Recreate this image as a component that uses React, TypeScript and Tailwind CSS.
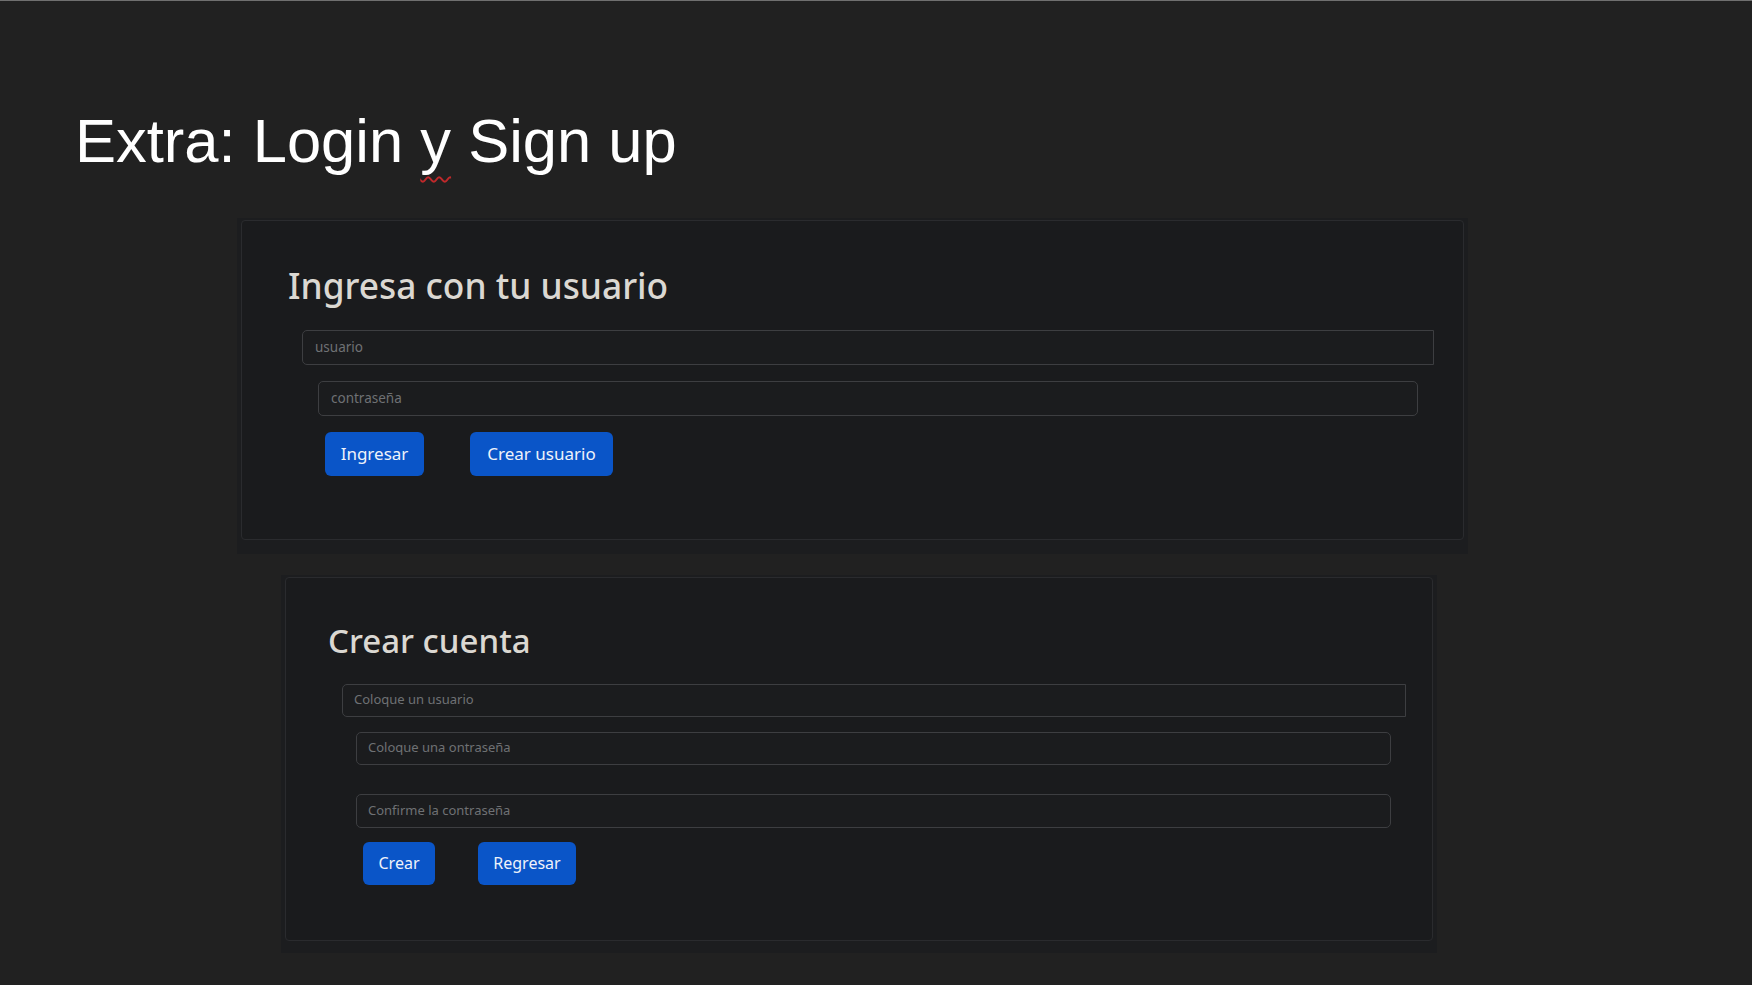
const sans = "font-['Noto_Sans','Open_Sans',sans-serif]";

type FieldProps = {
  placeholder: string;
  className: string;
};

const Field = ({ placeholder, className }: FieldProps) => {
  return (
    <div
      className={`flex items-center border border-[#3d3e41] bg-[#1b1c1e] text-[#6f7174] ${className}`}
    >
      {placeholder}
    </div>
  );
};

const Btn = ({ label, className }: { label: string; className: string }) => {
  return (
    <div
      className={`flex items-center justify-center rounded-[6px] bg-[#0a55c8] text-[#eef2fa] ${className}`}
    >
      {label}
    </div>
  );
};

export default function App() {
  return (
    <div className={`min-h-[985px] w-full border-t border-[#707070] bg-[#212121] ${sans}`}>
      <h1 className="pl-[75px] pt-[109px] font-['Liberation_Sans',Arial,sans-serif] text-[61.5px] leading-none text-white">
        Extra: Login{" "}
        <span className="underline decoration-[#c0282a] decoration-wavy decoration-[1.5px] underline-offset-[14px]">
          y
        </span>{" "}
        Sign up
      </h1>

      {/* login card */}
      <div className="ml-[237px] mt-[46px] h-[336px] w-[1231px] bg-[#1c1d1f] px-[4px] pb-[14px] pt-[2px]">
        <div className="h-[320px] rounded-[4px] border border-[#2a2b2e] bg-[#1a1b1d] pt-[47px]">
          <h2 className="ml-[46px] text-[35.3px] font-medium leading-none text-[#dbd8d2]">
            Ingresa con tu usuario
          </h2>
          <Field
            placeholder="usuario"
            className="ml-[60px] mr-[29px] mt-[27px] h-[35px] rounded-l-[5px] pl-[12px] text-[13.5px]"
          />
          <Field
            placeholder="contraseña"
            className="ml-[76px] mr-[45px] mt-[16px] h-[35px] rounded-[5px] pl-[12px] text-[13.5px]"
          />
          <div className="ml-[83px] mt-[16px] flex gap-[46px] text-[17px]">
            <Btn label="Ingresar" className="h-[44px] w-[99px]" />
            <Btn label="Crear usuario" className="h-[44px] w-[143px]" />
          </div>
        </div>
      </div>

      {/* sign up card */}
      <div className="ml-[281px] mt-[21px] h-[378px] w-[1156px] bg-[#1c1d1f] px-[4px] pb-[12px] pt-[2px]">
        <div className="h-[364px] rounded-[4px] border border-[#2a2b2e] bg-[#1a1b1d] pt-[46px]">
          <h2 className="ml-[42px] text-[33px] font-medium leading-none text-[#dbd8d2]">
            Crear cuenta
          </h2>
          <Field
            placeholder="Coloque un usuario"
            className="ml-[56px] mr-[26px] mt-[27px] h-[33px] rounded-l-[5px] pl-[11px] text-[13px]"
          />
          <Field
            placeholder="Coloque una ontraseña"
            className="ml-[70px] mr-[41px] mt-[15px] h-[33px] rounded-[5px] pl-[11px] text-[13px]"
          />
          <Field
            placeholder="Confirme la contraseña"
            className="ml-[70px] mr-[41px] mt-[29px] h-[34px] rounded-[5px] pl-[11px] text-[13px]"
          />
          <div className="ml-[77px] mt-[14px] flex gap-[43px] text-[16px]">
            <Btn label="Crear" className="h-[43px] w-[72px]" />
            <Btn label="Regresar" className="h-[43px] w-[98px]" />
          </div>
        </div>
      </div>
    </div>
  );
}
